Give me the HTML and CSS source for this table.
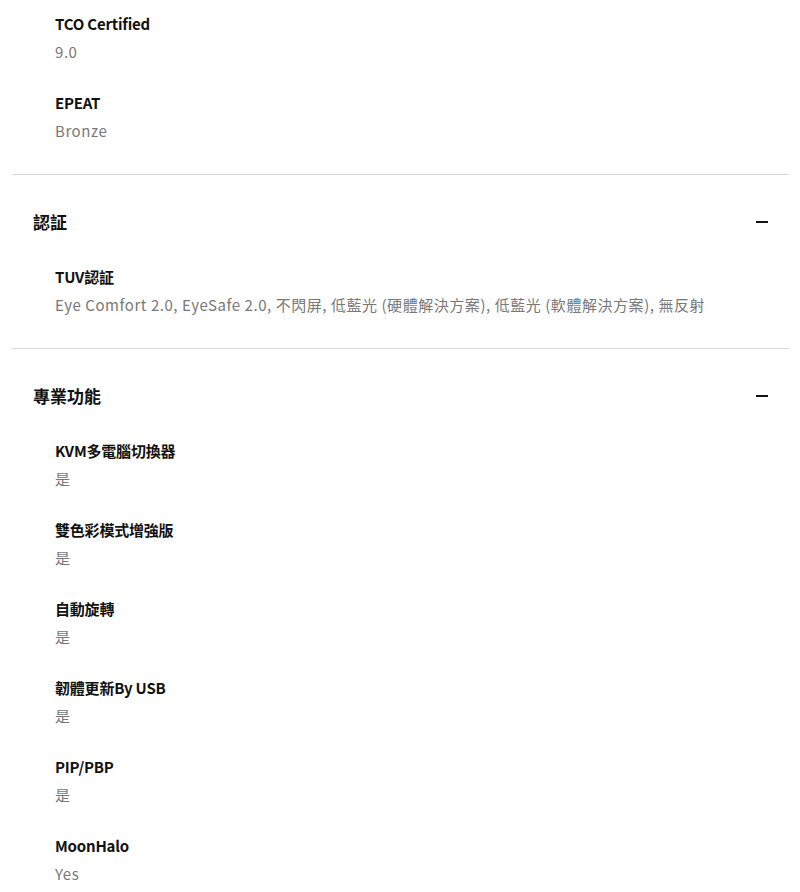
FILE: index.html
```html
<!DOCTYPE html>
<html lang="zh-Hant">
<head>
<meta charset="utf-8">
<link rel="stylesheet" href="styles.css">
</head>
<body>
<div class="page">
  <div class="section-body first">
    <div class="item"><div class="label">TCO Certified</div><div class="value">9.0</div></div>
    <div class="item"><div class="label">EPEAT</div><div class="value">Bronze</div></div>
  </div>
  <div class="section">
    <div class="section-head"><span class="title">認証</span><span class="minus"></span></div>
    <div class="section-body">
      <div class="item"><div class="label">TUV認証</div><div class="value">Eye Comfort 2.0, EyeSafe 2.0, 不閃屏, 低藍光 (硬體解決方案), 低藍光 (軟體解決方案), 無反射</div></div>
    </div>
  </div>
  <div class="section">
    <div class="section-head"><span class="title">專業功能</span><span class="minus"></span></div>
    <div class="section-body">
      <div class="item"><div class="label">KVM多電腦切換器</div><div class="value">是</div></div>
      <div class="item"><div class="label">雙色彩模式增強版</div><div class="value">是</div></div>
      <div class="item"><div class="label">自動旋轉</div><div class="value">是</div></div>
      <div class="item"><div class="label">韌體更新By USB</div><div class="value">是</div></div>
      <div class="item"><div class="label">PIP/PBP</div><div class="value">是</div></div>
      <div class="item"><div class="label">MoonHalo</div><div class="value">Yes</div></div>
    </div>
  </div>
</div>
</body>
</html>
```
FILE: styles.css
```css
html, body {
  margin: 0;
  padding: 0;
  background: #fff;
}
body {
  font-family: "Noto Sans CJK TC", "Noto Sans", sans-serif;
  color: #111;
}
.page {
  margin: 0 11px 0 12px;
}
.section-body {
  display: flex;
  flex-direction: column;
  gap: 23px;
  padding: 0 0 29px 43px;
}
.section-body.first {
  padding-top: 10px;
}
.section {
  border-top: 1px solid #d9d9d9;
}
.section-head {
  display: flex;
  align-items: center;
  justify-content: space-between;
  padding: 33px 21px 27px 21px;
  height: 28px;
}
.title {
  font-size: 17px;
  font-weight: 700;
  line-height: 28px;
}
.minus {
  width: 12px;
  height: 2px;
  background: #111;
}
.label {
  font-size: 15px;
  font-weight: 700;
  line-height: 28px;
  color: #111;
  letter-spacing: -0.2px;
}
.value {
  font-size: 15px;
  line-height: 28px;
  color: #787878;
  letter-spacing: 0.55px;
}
```
